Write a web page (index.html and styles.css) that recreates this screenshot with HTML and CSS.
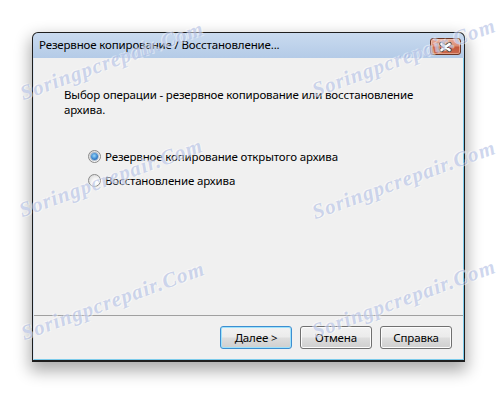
FILE: index.html
```html
<!DOCTYPE html>
<html lang="ru">
<head>
    <meta charset="UTF-8">
    <title>Резервное копирование / Восстановление...</title>
    <link rel="stylesheet" href="styles.css">
</head>
<body>
    <div class="window">
        <div class="titlebar">
            <span class="title">Резервное копирование / Восстановление...</span>
            <div class="close">
                <svg width="15" height="10" viewBox="0 0 15 10">
                    <path d="M3.5 2 L11.5 8 M11.5 2 L3.5 8" stroke="#505050" stroke-width="4.4" stroke-linecap="round"/>
                    <path d="M3.5 2 L11.5 8 M11.5 2 L3.5 8" stroke="#ffffff" stroke-width="2.6" stroke-linecap="round"/>
                </svg>
            </div>
        </div>

        <div class="client">
            <p class="intro">Выбор операции - резервное копирование или восстановление<br>архива.</p>

            <div class="options">
                <label class="option">
                    <span class="radio checked"></span>
                    Резервное копирование открытого архива
                </label>
                <label class="option">
                    <span class="radio"></span>
                    Восстановление архива
                </label>
            </div>

            <div class="spacer"></div>

            <div class="footer">
                <button class="btn default">Далее &gt;</button>
                <button class="btn">Отмена</button>
                <button class="btn">Справка</button>
            </div>
        </div>
    </div>

    <!-- watermark overlay -->
    <div class="watermarks">
        <span class="wm wm-1">Soringpcrepair.Com</span>
        <span class="wm wm-2">Soringpcrepair.Com</span>
        <span class="wm wm-3">Soringpcrepair.Com</span>
        <span class="wm wm-4">Soringpcrepair.Com</span>
        <span class="wm wm-5">Soringpcrepair.Com</span>
        <span class="wm wm-6">Soringpcrepair.Com</span>
    </div>
</body>
</html>
```

FILE: styles.css
```css
* {
    margin: 0;
    padding: 0;
    box-sizing: border-box;
}

body {
    font-family: 'Noto Sans', 'Open Sans', sans-serif;
    font-size: 11.5px;
    letter-spacing: -0.15px;
    background: #ffffff;
    width: 498px;
    height: 393px;
    overflow: hidden;
    position: relative;
    padding: 32px 0 0 32px;
}

.window {
    width: 433px;
    height: 330px;
    display: flex;
    flex-direction: column;
    border: 1px solid #1e1e1e;
    border-bottom-width: 2px;
    border-radius: 6px 6px 0 0;
    background: linear-gradient(#c9daef, #b4cbe7 25px);
    box-shadow: 0 7px 16px 2px rgba(0, 0, 0, 0.33);
}

.titlebar {
    height: 25px;
    display: flex;
    align-items: center;
    justify-content: space-between;
    padding: 0 3px 0 6px;
}

.title {
    color: #000;
    margin-top: -2px;
}

.close {
    width: 31px;
    height: 17px;
    margin-top: 2px;
    border: 1px solid #6b3626;
    border-radius: 3px;
    background: linear-gradient(#e7ab97 0%, #d98c75 48%, #c4563a 52%, #c86a50 100%);
    box-shadow: inset 0 0 0 1px rgba(255, 220, 200, 0.45);
    display: flex;
    align-items: center;
    justify-content: center;
}

.client {
    flex: 1;
    display: flex;
    flex-direction: column;
    background: #f0f0f0;
    border-left: 1px solid #dce6f3;
    border-right: 1px solid #7ccbeb;
    border-bottom: 1px solid #7ccbeb;
}

.intro {
    padding: 29px 0 0 30px;
    line-height: 15px;
    color: #000;
}

.options {
    display: flex;
    flex-direction: column;
    gap: 8px;
    padding: 31px 0 0 54px;
}

.option {
    display: flex;
    align-items: center;
    gap: 4px;
    height: 16px;
    color: #000;
}

.radio {
    width: 13px;
    height: 13px;
    border-radius: 50%;
    border: 1px solid #8a8a8a;
    background: radial-gradient(circle at 65% 65%, #ffffff 0, #f4f4f4 40%, #cfcfcf 100%);
    display: flex;
    align-items: center;
    justify-content: center;
}

.radio.checked::after {
    content: '';
    width: 7px;
    height: 7px;
    border-radius: 50%;
    background: radial-gradient(circle at 45% 40%, #9bd8fa 0, #3a86cf 55%, #1a4c8c 100%);
    box-shadow: 0 0 0 1px rgba(40, 80, 130, 0.35);
}

.spacer {
    flex: 1;
}

.footer {
    display: flex;
    justify-content: flex-end;
    gap: 8px;
    border-top: 1px solid #a0a0a0;
    padding: 10px 11px 10px 0;
}

.btn {
    width: 72px;
    height: 23px;
    font-family: inherit;
    font-size: 11.5px;
    letter-spacing: -0.15px;
    color: #000;
    border: 1px solid #707070;
    border-radius: 3px;
    background: linear-gradient(#f2f2f2 0%, #ebebeb 48%, #dddddd 52%, #cfcfcf 100%);
    box-shadow: inset 0 0 0 1px #fcfcfc;
}

.btn.default {
    border-color: #3c8ed1;
    box-shadow: inset 0 0 0 1px #9ee2fb;
}

.watermarks {
    position: absolute;
    top: 0;
    left: 0;
    width: 100%;
    height: 100%;
    pointer-events: none;
}

.wm {
    position: absolute;
    transform: translate(-50%, -50%) rotate(-20deg);
    font-family: 'Liberation Serif', serif;
    font-style: italic;
    font-weight: bold;
    font-size: 21px;
    letter-spacing: 1px;
    white-space: nowrap;
    color: rgba(160, 176, 222, 0.5);
    text-shadow: 1px 1px 0 rgba(255, 255, 255, 0.45), -1px -1px 0 rgba(255, 255, 255, 0.45);
}

.wm-1 { left: 112px; top: 61px; }
.wm-2 { left: 404px; top: 58px; }
.wm-3 { left: 111px; top: 178px; }
.wm-4 { left: 404px; top: 180px; }
.wm-5 { left: 113px; top: 301px; }
.wm-6 { left: 404px; top: 299px; }
```
